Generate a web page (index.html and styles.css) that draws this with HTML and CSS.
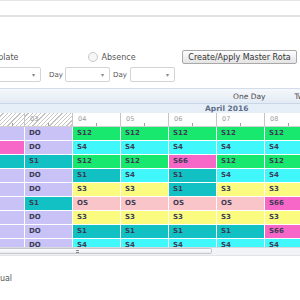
FILE: index.html
```html
<!DOCTYPE html>
<html>
<head>
<meta charset="utf-8">
<link rel="stylesheet" href="styles.css">
</head>
<body>
<div class="page">
  <div class="topbar"></div>
  <div class="opts">
    <span class="tmpl">Template</span>
    <span class="radio"></span>
    <span class="lbl">Absence</span>
    <button class="btn">Create/Apply Master Rota</button>
  </div>
  <div class="sels">
    <div class="sel s1"><span class="arr">&#9662;</span></div>
    <span class="day d1">Day</span>
    <div class="sel s2"><span class="arr">&#9662;</span></div>
    <span class="day d2">Day</span>
    <div class="sel s3"><span class="arr">&#9662;</span></div>
  </div>
  <div class="sched">
    <div class="toolbar"><span class="view">One Day</span><span class="view v2">Two Days</span></div>
    <div class="month"><span>April 2016</span></div>
    <div class="hdr">
      <div class="hc hatch"></div>
      <div class="hc hatch">03</div>
      <div class="hc">04</div>
      <div class="hc">05</div>
      <div class="hc">06</div>
      <div class="hc">07</div>
      <div class="hc">08</div>
    </div>
    <div class="rows">
      <div class="grid">
        <div class="c lav"></div><div class="c lav">DO</div><div class="c grn">S12</div><div class="c grn">S12</div><div class="c grn">S12</div><div class="c grn">S12</div><div class="c grn">S12</div>
        <div class="c mag"></div><div class="c lav">DO</div><div class="c cyn">S4</div><div class="c cyn">S4</div><div class="c cyn">S4</div><div class="c cyn">S4</div><div class="c cyn">S4</div>
        <div class="c tea"></div><div class="c tea">S1</div><div class="c grn">S12</div><div class="c grn">S12</div><div class="c mag">S66</div><div class="c grn">S12</div><div class="c grn">S12</div>
        <div class="c lav"></div><div class="c lav">DO</div><div class="c tea">S1</div><div class="c cyn">S4</div><div class="c tea">S1</div><div class="c cyn">S4</div><div class="c cyn">S4</div>
        <div class="c lav"></div><div class="c lav">DO</div><div class="c yel">S3</div><div class="c yel">S3</div><div class="c tea">S1</div><div class="c yel">S3</div><div class="c yel">S3</div>
        <div class="c lav"></div><div class="c tea">S1</div><div class="c pnk">OS</div><div class="c pnk">OS</div><div class="c pnk">OS</div><div class="c pnk">OS</div><div class="c mag">S66</div>
        <div class="c lav"></div><div class="c lav">DO</div><div class="c yel">S3</div><div class="c yel">S3</div><div class="c yel">S3</div><div class="c yel">S3</div><div class="c yel">S3</div>
        <div class="c lav"></div><div class="c lav">DO</div><div class="c tea">S1</div><div class="c tea">S1</div><div class="c tea">S1</div><div class="c tea">S1</div><div class="c mag">S66</div>
        <div class="c lav"></div><div class="c lav">DO</div><div class="c cyn">S4</div><div class="c cyn">S4</div><div class="c cyn">S4</div><div class="c cyn">S4</div><div class="c cyn">S4</div>
      </div>
    </div>
    <div class="hscroll"><div class="thumb"><span class="grip"></span></div></div>
  </div>
  <div class="manual">Manual</div>
</div>
</body>
</html>
```
FILE: styles.css
```css
html, body {
  margin: 0;
  padding: 0;
  background: #fff;
}
body {
  width: 300px;
  height: 300px;
  overflow: hidden;
  font-family: "DejaVu Sans", Verdana, sans-serif;
  color: #444;
}
.page {
  width: 300px;
  overflow: hidden;
}
.topbar {
  height: 14px;
  border-top: 1px solid #e4e4e4;
  border-bottom: 2px solid #e2e2e2;
}
.opts {
  display: flex;
  align-items: center;
  height: 14px;
  margin-top: 33px;
  font-size: 8px;
}
.tmpl {
  margin-left: -18px;
  color: #555;
}
.radio {
  width: 8px;
  height: 8px;
  border: 1px solid #c8c8c8;
  border-radius: 50%;
  margin-left: 69px;
  background: #f6f6f6;
}
.lbl {
  margin-left: 4px;
  color: #555;
}
.btn {
  margin-left: auto;
  margin-right: 3px;
  height: 14px;
  width: 115px;
  padding: 0;
  font-family: "DejaVu Sans", Verdana, sans-serif;
  font-size: 8px;
  color: #333;
  border: 1px solid #a9a9a9;
  border-radius: 2px;
  background: linear-gradient(#fdfdfd, #e4e4e4);
}
.sels {
  display: flex;
  align-items: center;
  height: 15px;
  margin-top: 3px;
  font-size: 7px;
}
.sel {
  height: 13px;
  box-sizing: border-box;
  height: 15px;
  border: 1px solid #d4d4d4;
  border-radius: 2px;
  background: #fff;
  display: flex;
  align-items: center;
  justify-content: flex-end;
}
.arr {
  font-size: 6px;
  color: #888;
  margin-right: 5px;
}
.s1 { width: 61px; margin-left: -20px; }
.s2 { width: 45px; }
.s3 { width: 45px; }
.day {
  color: #555;
  width: 14px;
  white-space: nowrap;
}
.d1 { margin: 0 2px 0 8px; }
.d2 { margin: 0 3px 0 3px; }
.sched {
  margin-top: 6px;
  border-top: 1px solid #d3dce8;
}
.toolbar {
  height: 14px;
  display: flex;
  align-items: center;
  background: linear-gradient(#f5f8fc, #e2eaf4);
  border-bottom: 1px solid #c9d6e6;
  font-size: 7.5px;
  color: #4a4a4a;
  white-space: nowrap;
}
.view { margin-left: 233px; }
.v2 { margin-left: 29px; }
.month {
  height: 9px;
  background: #e6eef8;
  font-size: 7.5px;
  font-weight: bold;
  color: #5f6f88;
  line-height: 10px;
  padding-left: 205px;
  white-space: nowrap;
}
.hdr {
  display: grid;
  grid-template-columns: 24px repeat(6, 47px);
  column-gap: 1px;
  height: 13px;
  background: #c4c4c4;
  border-bottom: 1px solid #d0d0d0;
  width: 312px;
}
.hc {
  background: #fff linear-gradient(#a0a0a0, #a0a0a0) no-repeat center bottom / 1px 3px;
  font-size: 6.5px;
  color: #9a9a9a;
  padding-left: 5px;
  line-height: 12px;
}
.hatch {
  background:
    linear-gradient(#a0a0a0, #a0a0a0) no-repeat center bottom / 1px 3px,
    repeating-linear-gradient(135deg, #fff 0 2px, #c4c4c4 2px 3px);
}
.rows {
  height: 120px;
  overflow: hidden;
}
.grid {
  display: grid;
  grid-template-columns: 24px repeat(6, 47px);
  grid-auto-rows: 13px;
  gap: 1px;
  width: 312px;
  background: #fff;
}
.c {
  font-size: 7px;
  font-weight: bold;
  line-height: 13px;
  padding-left: 4px;
  color: #3c3c55;
  white-space: nowrap;
}
.lav { background: #c8c2f6; }
.grn { background: #19e86e; }
.cyn { background: #40f7fb; }
.tea { background: #12c1c3; }
.yel { background: #fbfb80; }
.pnk { background: #f9c5c8; }
.mag { background: #f667c8; }
.hscroll {
  height: 7px;
  background: #f1f3f6;
  border-top: 1px solid #d6d9de;
  border-bottom: 1px solid #e2e4e8;
  display: flex;
}
.thumb {
  width: 212px;
  height: 6px;
  box-sizing: border-box;
  border: 1px solid #c3c6cc;
  border-left: none;
  border-radius: 0 2px 2px 0;
  background: linear-gradient(#fdfdfd, #e9ebee);
  display: flex;
  align-items: center;
}
.grip {
  width: 3px;
  height: 3px;
  margin-left: 76px;
  border-top: 1px solid #888;
  border-bottom: 1px solid #888;
  box-sizing: border-box;
}
.manual {
  margin-top: 18px;
  margin-left: -17px;
  font-size: 8px;
  color: #555;
}
```
